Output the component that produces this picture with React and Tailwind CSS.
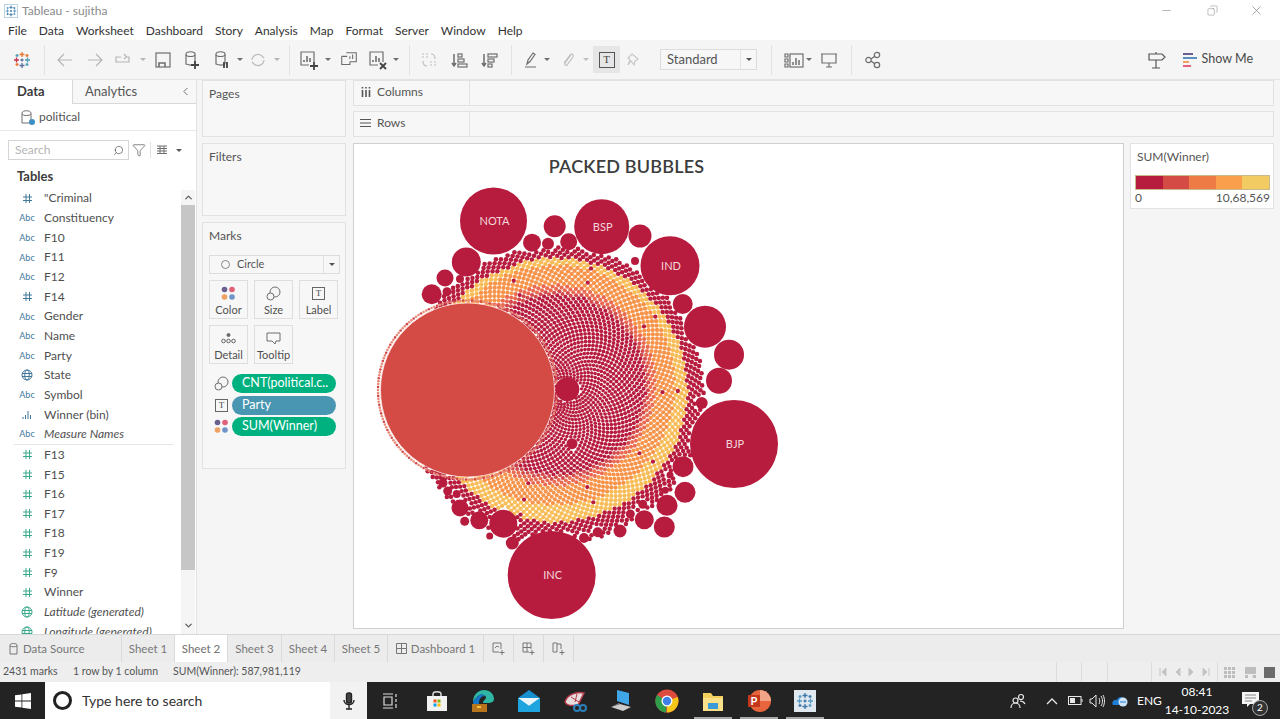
import { ChevronLeft, ChevronUp, ChevronDown, Search, Filter, Minus, X, Copy } from "lucide-react";

const fields = [
  ["num", '"Criminal'],
  ["abc", "Constituency"],
  ["abc", "F10"],
  ["abc", "F11"],
  ["abc", "F12"],
  ["num", "F14"],
  ["abc", "Gender"],
  ["abc", "Name"],
  ["abc", "Party"],
  ["geo", "State"],
  ["abc", "Symbol"],
  ["bin", "Winner (bin)"],
  ["abc", "Measure Names", true],
];
const measures = [
  ["m", "F13"],
  ["m", "F15"],
  ["m", "F16"],
  ["m", "F17"],
  ["m", "F18"],
  ["m", "F19"],
  ["m", "F9"],
  ["m", "Winner"],
  ["mgeo", "Latitude (generated)", true],
  ["mgeo", "Longitude (generated)", true],
];

const RED = "#b71c3e";
const big = { x: 467.5, y: 390, r: 87 };
const labelled = [
  [493.5, 221, 33.5, "NOTA"],
  [601.7, 226.7, 27.5, "BSP"],
  [670, 265.7, 29.5, "IND"],
  [734, 444, 44, "BJP"],
  [551.7, 575, 44, "INC"],
];
const small = [
  [554.7, 226.3, 11], [532, 242.7, 9], [548, 243.7, 6], [568.7, 241.7, 8.5], [640, 236, 11.5],
  [466.3, 262, 14.5], [445, 278, 8.5], [431.7, 294.3, 10], [460, 279, 4], [447, 291.7, 4.5],
  [635, 261, 4], [682.7, 304, 10], [705, 326.7, 21], [729, 354.7, 15], [719, 380.7, 13],
  [701.7, 403, 6], [567.3, 389.3, 12], [572, 443.7, 5.5], [683, 466.7, 10.5], [685, 492.3, 10.5],
  [667, 505.3, 10.5], [664.3, 527, 10.5], [644.3, 519.7, 9.5], [620, 531, 6.5], [597.7, 532.3, 5],
  [584, 538, 5], [642.7, 504.3, 4.5], [630.3, 514, 4.5], [503.3, 523.7, 14], [479.3, 520.3, 9],
  [460, 508, 8.5], [512.3, 543, 6.5], [464.7, 521.3, 4.5], [443, 483, 4.5], [447.7, 491, 4.5],
  [456.7, 494, 4], [489.7, 536, 3.5], [665.3, 490.3, 3.5], [670, 475, 3.5],
];
const solid = [...labelled, ...small];

// spiral of tiny marks, tighter toward the middle; whatever a solid bubble sits on gets skipped
function buildDots() {
  const out = [];
  const N = 4200;
  for (let i = 1; i < N; i++) {
    const rad = 149 * Math.pow(i / N, 0.6);
    const a = i * 2.39996;
    const x = 555 + rad * Math.cos(a);
    const y = 395 + rad * Math.sin(a);
    if (Math.hypot(x - big.x, y - big.y) < big.r - 1) continue;
    if (solid.some((b) => Math.hypot(x - b[0], y - b[1]) < b[2] + 0.500)) continue;
    const d = Math.hypot(x - 555, y - 390);
    const inner = Math.hypot(x - 555, y - 385);
    let fill = RED;
    if (d < 132 && inner > 90) {
      const t = (inner - 90) / 42;
      fill = t > 0.72 ? "#f8bd58" : t > 0.25 ? "#f7944a" : "#ea6a50";
      if (t < 0.1) fill = "#d24a4c";
      if ((i * 37) % 61 === 0) fill = RED;
    }
    out.push({ x, y, fill, key: i, r: 1.550 + 0.750 * (rad / 149) });
  }
  return out;
}
const dots = buildDots();
const ring = Array.from({ length: 190 }, (_, i) => i);

function Ico({ children, w = 18, h = 18, box = "0 0 18 18", stroke = "#6e6e6e", sw = 1.2, className = "" }) {
  return (
    <svg width={w} height={h} viewBox={box} fill="none" stroke={stroke} strokeWidth={sw} className={className}>
      {children}
    </svg>
  );
}

function Caret({ color = "#6e6e6e" }) {
  return <span className="block h-0 w-0 border-x-[3px] border-t-[3px] border-x-transparent" style={{ borderTopColor: color }} />;
}

function Cell({ className = "", children }) {
  return <div className={`flex shrink-0 items-center justify-center ${className}`}>{children}</div>;
}

function TableauLogo({ size = 18, a = "#e8762c", b = "#5b6f9e", c = "#c8354d", d = "#4f9fb8" }) {
  return (
    <svg width={size} height={size} viewBox="0 0 18 18" strokeWidth="1.3" fill="none">
      <path d="M9 1v5M6.5 3.5h5" stroke={a} />
      <path d="M9 12v5M6.5 14.500h5" stroke={b} />
      <path d="M1 9h5M3.500 6.500v5" stroke={c} />
      <path d="M12 9h5M14.500 6.500v5" stroke={d} />
      <path d="M4 3v3M2.500 4.500h3M14 12v3M12.500 13.500h3" stroke={d} />
      <path d="M14 3v3M12.500 4.500h3M4 12v3M2.500 13.500h3" stroke={a} />
      <path d="M9 7.500v3M7.500 9h3" stroke={b} />
    </svg>
  );
}

function Cylinder({ children }) {
  return (
    <Ico w={22} h={22} box="0 0 22 22">
      <path d="M5 5c0-3 9-3 9 0v9c0 2-4 3-9 1z" />
      <path d="M5 6c1 2 8 2 9 0" />
      {children}
    </Ico>
  );
}

function BarBox({ children }) {
  return (
    <Ico w={22} h={22} box="0 0 22 22">
      <path d="M16 13V3H3v13h8" />
      <path d="M6 13v-2M9 13V7M12 13V9" strokeWidth="1.600" />
      {children}
    </Ico>
  );
}

function Toolbar() {
  return (
    <div className="flex h-[39px] items-center bg-[#f5f5f5]">
      <Cell className="w-[44px]"><TableauLogo /></Cell>
      <div className="h-[30px] w-px bg-[#e3e3e3]" />
      <Cell className="ml-[5px] w-[30px]">
        <Ico stroke="#b5b5b5"><path d="M16 9H2M8 3L2 9l6 6" /></Ico>
      </Cell>
      <Cell className="w-[30px]">
        <Ico stroke="#b5b5b5"><path d="M2 9h14M10 3l6 6-6 6" /></Ico>
      </Cell>
      <Cell className="w-[26px]">
        <Ico stroke="#b5b5b5"><path d="M12 6h3v5H2V6h5M10 3l2.500 3L10 8" /></Ico>
      </Cell>
      <Cell className="w-[14px]"><Caret color="#b5b5b5" /></Cell>
      <Cell className="w-[26px]">
        <Ico><rect x="2" y="2" width="14" height="14" /><path d="M5 16v-4h6v4" strokeWidth="1.600" /></Ico>
      </Cell>
      <Cell className="w-[32px]">
        <Cylinder><path d="M14 12v8M10 16h8" stroke="#444" strokeWidth="1.800" /></Cylinder>
      </Cell>
      <Cell className="w-[28px]">
        <Cylinder><path d="M13 13v6M16 13v6" stroke="#444" strokeWidth="1.800" /></Cylinder>
      </Cell>
      <Cell className="w-[8px]"><Caret /></Cell>
      <Cell className="w-[28px]">
        <Ico stroke="#bdbdbd"><path d="M3 9a6 6 0 0 1 10-4l2 2M15 9a6 6 0 0 1-10 4l-2-2" /></Ico>
      </Cell>
      <Cell className="w-[10px]"><Caret color="#b5b5b5" /></Cell>
      <div className="ml-[7px] h-[30px] w-px bg-[#e3e3e3]" />
      <Cell className="ml-[5px] w-[28px]">
        <BarBox><path d="M16 13v8M12 17h8" stroke="#444" strokeWidth="1.800" /></BarBox>
      </Cell>
      <Cell className="w-[10px]"><Caret /></Cell>
      <Cell className="w-[32px]">
        <Ico w={20} h={20} box="0 0 22 22">
          <path d="M8 3h11v10H12" />
          <path d="M3 7h6M3 7v9h9v-3" />
          <path d="M12 10V7M15 10V5" />
        </Ico>
      </Cell>
      <Cell className="w-[26px]">
        <BarBox><path d="M13 14l6 6M19 14l-6 6" stroke="#444" strokeWidth="1.800" /></BarBox>
      </Cell>
      <Cell className="w-[10px]"><Caret /></Cell>
      <div className="ml-[8px] h-[30px] w-px bg-[#e3e3e3]" />
      <Cell className="ml-[6px] w-[26px]">
        <Ico stroke="#c0c0c0"><path d="M2 3h2M6 3h2M2 6h2M6 6h2M10 14h2M14 14h2M10 11h2M14 11h2M11 3c3 0 4 2 4 5M7 15c-3 0-4-2-4-5" /></Ico>
      </Cell>
      <Cell className="w-[34px]">
        <Ico><path d="M4 3v11M2 12l2 3 2-3" strokeWidth="1.500" /><rect x="8" y="3" width="4" height="3" /><rect x="8" y="8" width="6" height="3" /><rect x="8" y="13" width="9" height="3" /></Ico>
      </Cell>
      <Cell className="w-[26px]">
        <Ico><path d="M4 3v11M2 12l2 3 2-3" strokeWidth="1.500" /><rect x="8" y="3" width="9" height="3" /><rect x="8" y="8" width="6" height="3" /><rect x="8" y="13" width="4" height="3" /></Ico>
      </Cell>
      <div className="ml-[9px] h-[30px] w-px bg-[#e3e3e3]" />
      <Cell className="ml-[9px] w-[20px]">
        <Ico><path d="M5 13l1-4 5-7 2 1.500-5 7zM3 16h11" /></Ico>
      </Cell>
      <Cell className="w-[12px]"><Caret /></Cell>
      <Cell className="ml-[4px] w-[22px]">
        <Ico stroke="#c0c0c0"><path d="M12 4l-6 8c-1 2 1 3 2 2l6-8c1-3-2-4-3-2l-6 8" /></Ico>
      </Cell>
      <Cell className="w-[14px]"><Caret color="#c0c0c0" /></Cell>
      <Cell className="h-[27px] w-[27px] bg-[#e6e6e6]">
        <div className="flex h-[16px] w-[16px] items-center justify-center border border-[#555] font-['Liberation_Serif',serif] text-[11px] leading-none text-[#444]">T</div>
      </Cell>
      <Cell className="w-[28px]">
        <Ico stroke="#c8c8c8"><path d="M7 3l6 5-3 2-1 4-3-4-3 4 2-5-2-2z" /></Ico>
      </Cell>
      <div className="ml-[12px] flex h-[21px] w-[97px] items-center border border-[#dcdcdc] bg-[#f7f7f7] text-[13px] text-[#555]">
        <span className="flex-1 pl-[6px]">Standard</span>
        <span className="flex h-full w-[16px] items-center justify-center border-l border-[#e4e4e4]"><Caret color="#555" /></span>
      </div>
      <div className="ml-[14px] h-[30px] w-px bg-[#e3e3e3]" />
      <Cell className="ml-[10px] w-[24px]">
        <Ico w={20} h={20} box="0 0 20 20">
          <path d="M1 4h3v3H1zM1 9h3v3H1zM1 14h3v3H1z" />
          <rect x="6" y="4" width="13" height="13" />
          <path d="M9 15v-3M12 15V8M15 15v-5" strokeWidth="1.500" />
        </Ico>
      </Cell>
      <Cell className="w-[6px]"><Caret /></Cell>
      <Cell className="ml-[2px] w-[30px]">
        <Ico><path d="M1 3h16M2 3v9h14V3M9 12v4M6 16h6" /></Ico>
      </Cell>
      <div className="ml-[7px] h-[30px] w-px bg-[#e3e3e3]" />
      <Cell className="ml-[8px] w-[26px]">
        <Ico><circle cx="4.500" cy="9" r="2.700" /><circle cx="13" cy="4" r="2.700" /><circle cx="13" cy="14" r="2.700" /><path d="M7 8l4-3M7 10l4 3" /></Ico>
      </Cell>
      <div className="flex-1" />
      <Ico w={20} h={20} box="0 0 20 20" stroke="#555">
        <path d="M2 4h13l3 3-3 3H2zM9 10v8M5 18h8M9 4V2" />
      </Ico>
      <svg width="15" height="16" viewBox="0 0 15 16" className="ml-[16px]">
        <rect x="0" y="1" width="10" height="2" fill="#6a5f8f" />
        <rect x="0" y="5" width="14" height="2" fill="#5b8fc0" />
        <rect x="0" y="9" width="6" height="2" fill="#f0a060" />
        <rect x="0" y="13" width="8" height="2" fill="#e8607a" />
      </svg>
      <span className="ml-[4px] mr-[27px] text-[12.5px] text-[#4a4a4a]">Show Me</span>
    </div>
  );
}

function FieldIcon({ kind }) {
  if (kind === "abc")
    return <span className="text-[9px] text-[#41789a]">Abc</span>;
  if (kind === "num" || kind === "m") {
    const color = kind === "m" ? "#3aa98c" : "#41789a";
    return (
      <Ico w={11} h={11} box="0 0 11 11" stroke={color} sw={1}>
        <path d="M4 1v9M7.500 1v9M1 4h9M1 7.500h9" />
      </Ico>
    );
  }
  if (kind === "geo" || kind === "mgeo") {
    const color = kind === "mgeo" ? "#3aa98c" : "#41789a";
    return (
      <Ico w={12} h={12} box="0 0 12 12" stroke={color} sw={1}>
        <circle cx="6" cy="6" r="5" />
        <ellipse cx="6" cy="6" rx="2.200" ry="5" />
        <path d="M1 4.500h10M1 7.500h10" />
      </Ico>
    );
  }
  return (
    <Ico w={11} h={11} box="0 0 11 11" stroke="#41789a" sw={1}>
      <path d="M1 10V8M3.500 10V6M6 10V2M8.500 10V6" />
    </Ico>
  );
}

function FieldRow({ kind, name, italic }) {
  return (
    <div className="flex h-[19.67px] shrink-0 items-center">
      <span className="flex w-[44px] shrink-0 justify-center pl-[10px]"><FieldIcon kind={kind} /></span>
      <span className={`whitespace-nowrap text-[12px] text-[#4f4f4f] ${italic ? "italic" : ""}`}>{name}</span>
    </div>
  );
}

function DataPane() {
  return (
    <aside className="flex w-[197px] shrink-0 flex-col overflow-hidden border-r border-[#e2e2e2] bg-white">
      <div className="flex h-[24px] shrink-0">
        <div className="flex w-[73px] items-center justify-start border-r border-[#d8d8d8] pl-[17px] text-[13px] font-bold text-[#3c3c3c]">Data</div>
        <div className="flex flex-1 items-center border-b border-[#d8d8d8] bg-[#f7f7f7] pl-[12px] text-[13px] text-[#555]">
          <span className="flex-1">Analytics</span>
          <ChevronLeft size={13} strokeWidth={1.500} className="mr-[4px] text-[#555]" />
        </div>
      </div>
      <div className="flex h-[27px] shrink-0 items-center border-b border-[#e8e8e8] pl-[21px]">
        <span className="relative">
          <Ico w={13} h={15} box="0 0 13 15" sw={1}>
            <path d="M1 3c0-3 9-3 9 0v10H1z" /><path d="M1 4c1 2 8 2 9 0" />
          </Ico>
          <span className="absolute bottom-0 right-[-1px] h-[6px] w-[6px] rounded-full bg-[#3d8fc4]" />
        </span>
        <span className="ml-[5px] text-[12px] text-[#555]">political</span>
      </div>
      <div className="flex h-[38px] shrink-0 items-center pl-[8px]">
        <div className="flex h-[20px] w-[121px] items-center border border-[#d5d5d5] pl-[6px] pr-[4px] text-[12px] text-[#b5b5b5]">
          <span className="flex-1">Search</span>
          <Search size={11} strokeWidth={1.500} className="-scale-x-100 text-[#555]" />
        </div>
        <Filter size={14} strokeWidth={1.200} className="ml-[3px] text-[#555]" />
        <div className="ml-[4px] h-[16px] w-px bg-[#e0e0e0]" />
        <Ico w={12} h={10} box="0 0 12 10" sw={1} className="ml-[5px]">
          <path d="M1 1h10M1 3.500h10M1 6h10M1 8.500h10M4 1v8M8 1v8" />
        </Ico>
        <span className="ml-[8px]"><Caret color="#555" /></span>
      </div>
      <div className="flex min-h-0 flex-1">
        <div className="min-w-0 flex-1 overflow-hidden">
          <div className="mb-[4.500px] flex h-[15px] items-center pl-[17px] text-[13px] font-bold leading-[15px] text-[#3c3c3c]">Tables</div>
          <div className="flex flex-col">
            {fields.map(([k, n, i]) => <FieldRow key={n} kind={k} name={n} italic={i} />)}
          </div>
          <div className="ml-[14px] mr-[7px] h-px bg-[#e6e6e6]" />
          <div className="flex flex-col">
            {measures.map(([k, n, i]) => <FieldRow key={n} kind={k} name={n} italic={i} />)}
          </div>
        </div>
        <div className="mr-[1px] mt-[21px] flex w-[14px] shrink-0 flex-col bg-[#f5f5f5]">
          <div className="flex h-[15px] items-center justify-center"><ChevronUp size={11} strokeWidth={2.500} className="text-[#555]" /></div>
          <div className="h-[365px] bg-[#c6c6c6]" />
          <div className="flex-1" />
          <div className="flex h-[17px] items-center justify-center"><ChevronDown size={11} strokeWidth={2.500} className="text-[#555]" /></div>
        </div>
      </div>
    </aside>
  );
}

function MarkCard({ label, children }) {
  return (
    <div className="flex h-[39px] w-[39px] flex-col items-center justify-end border border-[#dedede] pb-[2px] text-[11px] leading-[13px] text-[#4f4f4f]">
      <div className="flex h-[20px] items-center">{children}</div>
      {label}
    </div>
  );
}

function ColorDots() {
  return (
    <svg width="15" height="15" viewBox="0 0 15 15">
      <circle cx="3.500" cy="3.500" r="2.800" fill="#6a5f8f" />
      <circle cx="11" cy="3.500" r="2.800" fill="#e0607a" />
      <circle cx="3.500" cy="11" r="2.800" fill="#f0a060" />
      <circle cx="11" cy="11" r="2.800" fill="#6f94c8" />
    </svg>
  );
}

function SizeIcon() {
  return (
    <Ico w={15} h={15} box="0 0 15 15" sw={1}>
      <circle cx="9" cy="6" r="5" fill="#f5f5f5" />
      <circle cx="4.500" cy="10.500" r="3.500" fill="#f5f5f5" />
    </Ico>
  );
}

function TBox() {
  return (
    <div className="flex h-[13px] w-[13px] items-center justify-center border border-[#666] font-['Liberation_Serif',serif] text-[9px] leading-none text-[#444]">T</div>
  );
}

function Pill({ color, children }) {
  return (
    <div className={`flex h-[19px] w-[104px] items-center whitespace-nowrap rounded-full pl-[10px] text-[12.5px] text-white ${color}`}>
      {children}
    </div>
  );
}

function Panel({ title, className = "", children }) {
  return (
    <div className={`border border-[#e2e2e2] bg-[#f7f7f7] px-[6px] pt-[5px] ${className}`}>
      <div className="text-[12px] leading-[16px] text-[#555]">{title}</div>
      {children}
    </div>
  );
}

function MiddleColumn() {
  return (
    <div className="ml-[5px] flex w-[144px] shrink-0 flex-col gap-[6px]">
      <Panel title="Pages" className="h-[57px]" />
      <Panel title="Filters" className="h-[73px]" />
      <Panel title="Marks" className="h-[247px]">
        <div className="mt-[11px] flex h-[19px] w-[131px] items-center border border-[#dcdcdc] text-[11px] text-[#555]">
          <span className="ml-[11px] h-[9px] w-[9px] rounded-full border border-[#888]" />
          <span className="ml-[7px] flex-1">Circle</span>
          <span className="flex h-full w-[16px] items-center justify-center border-l border-[#e0e0e0]"><Caret color="#555" /></span>
        </div>
        <div className="mt-[6px] flex gap-[6px]">
          <MarkCard label="Color"><ColorDots /></MarkCard>
          <MarkCard label="Size"><SizeIcon /></MarkCard>
          <MarkCard label="Label"><TBox /></MarkCard>
        </div>
        <div className="mt-[6px] flex gap-[6px]">
          <MarkCard label="Detail">
            <svg width="15" height="13" viewBox="0 0 15 13" fill="none" stroke="#666" strokeWidth="1">
              <circle cx="7.500" cy="3" r="1.500" fill="#666" />
              <circle cx="2.500" cy="9" r="1.800" /><circle cx="7.500" cy="9" r="1.800" /><circle cx="12.500" cy="9" r="1.800" />
            </svg>
          </MarkCard>
          <MarkCard label="Tooltip">
            <Ico w={15} h={15} box="0 0 15 15" sw={1}><path d="M1 2h13v8h-4l-1 3-3-3H1z" /></Ico>
          </MarkCard>
        </div>
        <div className="mt-[10px] flex flex-col gap-[2.500px]">
          <div className="flex items-center justify-end gap-[3px] pr-[3px]"><SizeIcon /><Pill color="bg-[#00b180]">CNT(political.c..</Pill></div>
          <div className="flex items-center justify-end gap-[4px] pr-[3px]"><TBox /><Pill color="bg-[#4996b2]">Party</Pill></div>
          <div className="flex items-center justify-end gap-[3px] pr-[3px]"><ColorDots /><Pill color="bg-[#00b180]">SUM(Winner)</Pill></div>
        </div>
      </Panel>
    </div>
  );
}

function Shelf({ label, icon }) {
  return (
    <div className="flex h-[26px] border border-[#e2e2e2] bg-[#f7f7f7] text-[12px] text-[#555]">
      <div className="flex w-[116px] items-center border-r border-[#e2e2e2] pb-[2px] pl-[6px]">
        <span className="mr-[6px] flex w-[11px] justify-center">{icon}</span>
        {label}
      </div>
    </div>
  );
}

function BubbleChart() {
  return (
    <svg width="769" height="441" viewBox="354 186 769 441" className="block">
      {dots.map((d) => <circle key={d.key} cx={d.x} cy={d.y} r={d.r} fill={d.fill} />)}
      {ring.map((i) => {
        const a = (i / 190) * Math.PI * 2;
        return (
          <circle
            key={i}
            cx={big.x + 89.500 * Math.cos(a)}
            cy={big.y + 89.500 * Math.sin(a)}
            r="1.300"
            fill={i % 3 === 0 ? "#d24a4c" : "#e88a78"}
          />
        );
      })}
      <circle cx={big.x} cy={big.y} r={big.r} fill="#d44b45" stroke="#fbe6e0" strokeWidth="0.800" />
      {solid.map((b, i) => (
        <circle key={i} cx={b[0]} cy={b[1]} r={b[2]} fill={RED} />
      ))}
      {labelled.map((b) => (
        <text key={b[3]} x={b[0] + 1} y={b[1] + 4} textAnchor="middle" fontSize="11" fill="#f3d5da">{b[3]}</text>
      ))}
    </svg>
  );
}

function CanvasArea() {
  return (
    <div className="ml-[7px] flex w-[921px] shrink-0 flex-col">
      <Shelf
        label="Columns"
        icon={<Ico w={10} h={10} box="0 0 10 10" stroke="#555" sw={1.600}><path d="M1.500 3v7M5 3v7M8.500 3v7M1.500 0v1.500M5 0v1.500M8.500 0v1.500" /></Ico>}
      />
      <div className="h-[5px]" />
      <Shelf
        label="Rows"
        icon={<Ico w={11} h={10} box="0 0 11 10" stroke="#555" sw={1.200}><path d="M0 1.500h11M0 5h11M0 8.500h11" /></Ico>}
      />
      <div className="mt-[6px] flex gap-[6px]">
        <div className="h-[486px] w-[771px] shrink-0 border border-[#cfcfcf] bg-white">
          <div className="flex h-[42px] items-start justify-center pr-[224px] pt-[9px] text-[18px] font-semibold leading-[26px] tracking-[0.2px] text-[#3c3c3c]">PACKED BUBBLES</div>
          <BubbleChart />
        </div>
        <div className="h-[66px] w-[144px] shrink-0 border border-[#e2e2e2] bg-white px-[4px] pt-[5px] text-[12px] text-[#555]">
          <div className="pl-[2px] leading-[16px]">SUM(Winner)</div>
          <div className="mt-[10px] flex h-[15px] w-[135px] border border-[#c9b98a]">
            <span className="flex-1 bg-[#b71c3e]" />
            <span className="flex-1 bg-[#d44b45]" />
            <span className="flex-1 bg-[#ee7a45]" />
            <span className="flex-1 bg-[#fa9f4b]" />
            <span className="flex-1 bg-[#f2cb62]" />
          </div>
          <div className="flex w-[135px] justify-between text-[12px] leading-[15px]"><span>0</span><span>10,68,569</span></div>
        </div>
      </div>
    </div>
  );
}

function SheetTab({ className = "", children }) {
  return (
    <div className={`flex h-full shrink-0 items-center justify-center border-r border-[#dadada] text-[11.5px] text-[#777] ${className}`}>
      {children}
    </div>
  );
}

function TabBar() {
  return (
    <div className="flex h-[28px] items-stretch border-t border-[#d8d8d8] bg-[#ececec]">
      <SheetTab className="w-[122px] justify-start pl-[9px]">
        <Ico w={9} h={12} box="0 0 9 12" stroke="#777" sw={1}><path d="M1 2c0-2 7-2 7 0v9H1zM1 3c1 1 6 1 7 0" /></Ico>
        <span className="ml-[5px]">Data Source</span>
      </SheetTab>
      <SheetTab className="w-[53px]">Sheet 1</SheetTab>
      <SheetTab className="w-[53px] bg-white font-medium text-[#444]">Sheet 2</SheetTab>
      <SheetTab className="w-[54px]">Sheet 3</SheetTab>
      <SheetTab className="w-[53px]">Sheet 4</SheetTab>
      <SheetTab className="w-[53px]">Sheet 5</SheetTab>
      <SheetTab className="w-[96px]">
        <Ico w={11} h={11} box="0 0 11 11" stroke="#777" sw={1}><path d="M.5.500h10v10H.500zM5.500.500v10M.5 5.500h10" /></Ico>
        <span className="ml-[4px]">Dashboard 1</span>
      </SheetTab>
      <SheetTab className="w-[30px]">
        <Ico w={15} h={15} box="0 0 15 15" stroke="#777" sw={1}><path d="M8 11H2V2h8v6M4 7l2-2 2 1M11 9v5M8.500 11.500h5" /></Ico>
      </SheetTab>
      <SheetTab className="w-[30px]">
        <Ico w={15} h={15} box="0 0 15 15" stroke="#777" sw={1}><path d="M8 11H2V2h8v6M6 2v9M2 6.500h8M11 9v5M8.500 11.500h5" /></Ico>
      </SheetTab>
      <SheetTab className="w-[30px]">
        <Ico w={15} h={15} box="0 0 15 15" stroke="#777" sw={1}><path d="M2 2h4v9H2zM6 3h4v5M11 9v5M8.500 11.500h5" /></Ico>
      </SheetTab>
    </div>
  );
}

function StatusBar() {
  return (
    <div className="flex h-[20px] items-center bg-[#eeeeee] text-[10.5px] text-[#555]">
      <span className="ml-[3px] w-[70px]">2431 marks</span>
      <span className="w-[100px]">1 row by 1 column</span>
      <span>SUM(Winner): 587,981,119</span>
      <div className="flex-1" />
      <div className="flex h-full items-center">
        <div className="h-full w-px bg-[#dcdcdc]" />
        <div className="ml-[24px] h-full w-px bg-[#dcdcdc]" />
        <div className="ml-[25px] h-full w-px bg-[#dcdcdc]" />
        <div className="ml-[43px] h-full w-px bg-[#dcdcdc]" />
        <div className="flex w-[65px] items-center justify-around px-[3px]">
          <Ico w={8} h={8} box="0 0 8 8" stroke="#c4c4c4" sw={1}><path d="M1 0v8M7 0L3 4l4 4z" fill="#c4c4c4" /></Ico>
          <Ico w={6} h={8} box="0 0 6 8" stroke="#c4c4c4" sw={1}><path d="M5 0L1 4l4 4z" fill="#c4c4c4" /></Ico>
          <Ico w={6} h={8} box="0 0 6 8" stroke="#c4c4c4" sw={1}><path d="M1 0l4 4-4 4z" fill="#c4c4c4" /></Ico>
          <Ico w={8} h={8} box="0 0 8 8" stroke="#c4c4c4" sw={1}><path d="M7 0v8M1 0l4 4-4 4z" fill="#c4c4c4" /></Ico>
        </div>
        <div className="h-full w-px bg-[#dcdcdc]" />
        <div className="ml-[6px] grid h-[11px] w-[11px] grid-cols-3 gap-px">
          {Array.from({ length: 9 }, (_, i) => <span key={i} className="bg-[#bdbdbd]" />)}
        </div>
        <div className="ml-[10px] flex h-[11px] w-[11px] flex-col gap-px">
          <span className="h-[7px] bg-[#bdbdbd]" />
          <span className="h-[3px] border-t-[3px] border-dotted border-[#bdbdbd]" />
        </div>
        <div className="ml-[8px] mr-[5px] h-[11px] w-[11px] bg-[#6b6b6b]" />
      </div>
    </div>
  );
}

function TaskApp({ children, line }) {
  return (
    <div className="relative flex h-full w-[46px] shrink-0 items-center justify-center">
      {children}
      {line && <span className="absolute bottom-0 left-[4px] right-[4px] h-[2px] bg-[#a8a8a8]" />}
    </div>
  );
}

function Taskbar() {
  return (
    <div className="flex h-[37px] items-center bg-[#232323] text-white">
      <div className="flex h-full w-[45px] items-center justify-center">
        <svg width="16" height="16" viewBox="0 0 16 16" fill="#fff">
          <path d="M0 2.300l6.500-.9v6.200H0zM7.300 1.300L16 0v7.600H7.300zM0 8.400h6.500v6.200L0 13.700zM7.300 8.400H16V16l-8.700-1.200z" />
        </svg>
      </div>
      <div className="flex h-full w-[285px] items-center bg-white pl-[8px] text-[14px] text-[#333]">
        <span className="h-[19px] w-[19px] rounded-full border-[3px] border-[#222]" />
        <span className="ml-[10px]">Type here to search</span>
      </div>
      <div className="flex h-full w-[37px] items-center justify-center bg-[#f2f2f2]">
        <Ico w={14} h={18} box="0 0 14 18" stroke="#222" sw={1.400}>
          <rect x="4.500" y="1" width="5" height="10" rx="2" fill="#444" />
          <path d="M2 8c0 6 10 6 10 0M7 13v4M4 17h6" />
        </Ico>
      </div>
      <Cell className="ml-[1px] w-[44px]">
        <Ico w={18} h={18} box="0 0 18 18" stroke="#ddd" sw={1.200}>
          <path d="M2 2h10M2 16h10M3 5h8v8H3zM15 2v3M15 7v3M15 12v4" />
        </Ico>
      </Cell>
      <div className="ml-[2px] flex h-full">
        <TaskApp>
          <svg width="22" height="22" viewBox="0 0 22 22">
            <path d="M7 6V4c0-3 8-3 8 0v2" fill="none" stroke="#ddd" strokeWidth="1.500" />
            <rect x="1" y="6" width="20" height="15" fill="#f2f2f2" />
            <rect x="7.500" y="9.500" width="3" height="3" fill="#f25022" /><rect x="11.500" y="9.500" width="3" height="3" fill="#7fba00" />
            <rect x="7.500" y="13.500" width="3" height="3" fill="#00a4ef" /><rect x="11.500" y="13.500" width="3" height="3" fill="#ffb900" />
          </svg>
        </TaskApp>
        <TaskApp>
          <svg width="24" height="24" viewBox="0 0 24 24">
            <path d="M2 13C2 5 8 1 13 1c6 0 10 4 10 9 0 3-3 4-6 4h-5c0-3 3-3 3-6-1-2-4-3-6-2-3 1-5 4-7 7z" fill="#2fb6a5" />
            <path d="M2 13c2-3 4-6 7-7 2-1 4 0 5 1-4 0-6 3-6 7 0 2 1 5 3 7-5-1-9-4-9-8z" fill="#1576c8" />
            <rect x="1" y="15" width="15" height="8" fill="#b8741d" />
            <rect x="6" y="17" width="4" height="2" fill="#f0c040" />
          </svg>
        </TaskApp>
        <TaskApp>
          <svg width="24" height="22" viewBox="0 0 24 22">
            <path d="M1 8L12 0l11 8v14H1z" fill="#1690cf" />
            <path d="M1 8h22l-11 8z" fill="#e9f4fb" />
            <path d="M1 8l11 8 11-8v14H1z" fill="#1ea5e0" />
          </svg>
        </TaskApp>
        <TaskApp>
          <svg width="24" height="24" viewBox="0 0 24 24">
            <path d="M2 13C4 6 13 2 21 4l-6 12C10 17 4 17 2 13z" fill="#e8dcdc" stroke="#b5394a" strokeWidth="1.500" />
            <path d="M8 8l8 5M14 5l-2 8" stroke="#b5394a" />
            <circle cx="14" cy="19" r="3" fill="none" stroke="#2a7fb8" strokeWidth="2" />
            <circle cx="20" cy="19" r="3" fill="none" stroke="#2a7fb8" strokeWidth="2" />
          </svg>
        </TaskApp>
        <TaskApp>
          <svg width="24" height="24" viewBox="0 0 24 24">
            <path d="M8 1l12 3v12L8 12z" fill="#3fa7e8" />
            <path d="M2 18l9-3 11 3-8 4z" fill="#ccc" />
            <path d="M2 18l8-4 1 1z" fill="#888" />
          </svg>
        </TaskApp>
        <TaskApp>
          <svg width="24" height="24" viewBox="0 0 24 24">
            <circle cx="12" cy="12" r="11.500" fill="#dd4b3e" />
            <path d="M12 12L22.700 8A11.500 11.500 0 0 1 12 23.500z" fill="#f5c518" />
            <path d="M12 12l-1 11.500A11.500 11.500 0 0 1 2 6z" fill="#2f9e4a" />
            <circle cx="12" cy="12" r="5.500" fill="#fff" />
            <circle cx="12" cy="12" r="4.200" fill="#3f80e8" />
          </svg>
        </TaskApp>
        <TaskApp line>
          <svg width="22" height="22" viewBox="0 0 22 22">
            <path d="M1 3h8l2 3h10v15H1z" fill="#f4cf5e" />
            <rect x="1" y="8" width="20" height="13" fill="#fbe08a" />
            <rect x="6" y="13" width="10" height="6" fill="#3a9ad8" />
          </svg>
        </TaskApp>
        <TaskApp line>
          <svg width="24" height="24" viewBox="0 0 24 24">
            <circle cx="13" cy="12" r="11" fill="#e8643c" />
            <path d="M13 1a11 11 0 0 1 11 11H13z" fill="#f2a488" />
            <rect x="1" y="6" width="12" height="12" rx="1" fill="#c4371a" />
            <text x="7" y="16" textAnchor="middle" fontSize="10" fontWeight="700" fill="#fff" fontFamily="Liberation Sans, sans-serif">P</text>
          </svg>
        </TaskApp>
        <TaskApp line>
          <div className="flex h-[22px] w-[22px] items-center justify-center bg-[#dfe9ef]">
            <TableauLogo size={18} a="#3f78a8" b="#3f78a8" c="#5b9bc4" d="#5b9bc4" />
          </div>
        </TaskApp>
      </div>
      <div className="flex-1" />
      <Ico w={16} h={16} box="0 0 16 16" stroke="#e8e8e8" sw={1.200} className="mr-[20px]">
        <circle cx="11" cy="4" r="2.500" /><circle cx="5.500" cy="7.500" r="2.500" />
        <path d="M1 15c0-3 2-5 4.500-5S10 12 10 15M10 8c2 0 4 1 5 3" />
      </Ico>
      <Ico w={12} h={8} box="0 0 12 8" stroke="#e8e8e8" sw={1.300} className="mr-[10px]"><path d="M1 7l5-5 5 5" /></Ico>
      <Ico w={15} h={9} box="0 0 15 9" stroke="#e8e8e8" sw={1} className="mr-[6px]">
        <rect x=".5" y=".500" width="12.500" height="8" /><rect x="2" y="2" width="5" height="5" fill="#e8e8e8" stroke="none" /><path d="M14 3v3" />
      </Ico>
      <Ico w={16} h={14} box="0 0 16 14" stroke="#e8e8e8" sw={1} className="mr-[7px]">
        <path d="M1 5h2l4-4v12l-4-4H1zM10 4c1 2 1 4 0 6M12 2c2 3 2 7 0 10M14 1c2 4 2 8 0 12" />
      </Ico>
      <svg width="16" height="13" viewBox="0 0 16 13" className="mr-[9px]">
        <path d="M1 11c-2-3 1-6 4-5 1-4 7-4 8 0 3 0 3 5 0 5z" fill="#1f7fd6" />
        <circle cx="11" cy="8" r="4.500" fill="#cfe4f5" /><path d="M8 8h6" stroke="#1f7fd6" />
      </svg>
      <span className="w-[24px] whitespace-nowrap text-[12px]">ENG</span>
      <div className="ml-[1px] flex w-[70px] flex-col items-center whitespace-nowrap text-[12px] leading-[18px]">
        <span>08:41</span>
        <span>14-10-2023</span>
      </div>
      <div className="relative ml-[9px] mr-[13px] h-[24px] w-[26px]">
        <svg width="17" height="16" viewBox="0 0 17 16" className="absolute left-[1px] top-[3px]">
          <path d="M0 0h17v12H8l-3 3v-3H0z" fill="#f5f5f5" />
          <path d="M3 3h11M3 6h11M3 9h7" stroke="#888" />
        </svg>
        <span className="absolute bottom-[-3px] right-[-1px] flex h-[16px] w-[16px] items-center justify-center rounded-full border border-[#aaa] bg-[#333] text-[10px]">2</span>
      </div>
    </div>
  );
}

export default function App() {
  return (
    <div className="flex h-[719px] w-[1280px] flex-col overflow-hidden bg-white font-['Lato','Liberation_Sans',sans-serif]">
      <div className="flex h-[21px] items-center pl-[4px] text-[12px] text-[#8a8a8a]">
        <div className="flex h-[14px] w-[14px] items-center justify-center border border-[#bcd3e2]">
          <TableauLogo size={12} a="#2f6f9f" b="#2f6f9f" c="#4f8fbf" d="#4f8fbf" />
        </div>
        <span className="ml-[4px]">Tableau - sujitha</span>
        <div className="flex-1" />
        <Minus size={13} strokeWidth={1} className="text-[#777]" />
        <Copy size={11} strokeWidth={1} className="ml-[34px] -scale-x-100 text-[#777]" />
        <X size={15} strokeWidth={1} className="ml-[31px] mr-[16px] text-[#777]" />
      </div>
      <nav className="flex h-[19px] items-center gap-[12px] pl-[8px] text-[12px] text-[#333]">
        {["File", "Data", "Worksheet", "Dashboard", "Story", "Analysis", "Map", "Format", "Server", "Window", "Help"].map((m) => (
          <span key={m}>{m}</span>
        ))}
      </nav>
      <Toolbar />
      <main className="flex h-[555px] border-t border-[#e4e4e4] bg-[#f5f5f5]">
        <DataPane />
        <MiddleColumn />
        <CanvasArea />
      </main>
      <TabBar />
      <StatusBar />
      <Taskbar />
    </div>
  );
}
